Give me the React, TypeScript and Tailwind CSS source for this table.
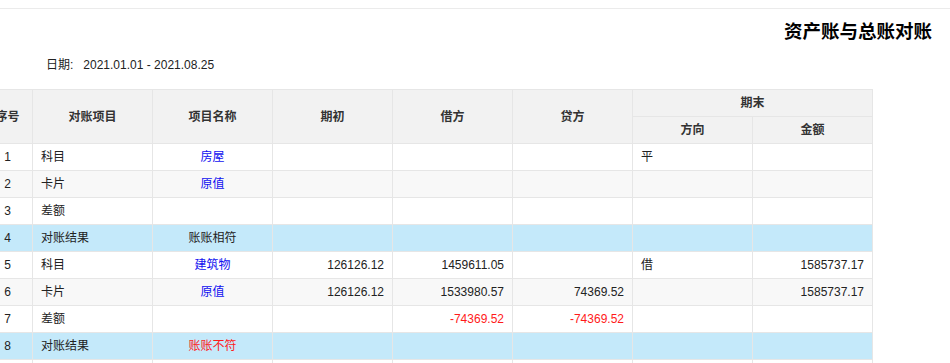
const ROWS = [
  { no: 1, item: "科目", name: "房屋", nameColor: "blue", begin: "", debit: "", credit: "", dir: "平", amount: "", kind: "odd" },
  { no: 2, item: "卡片", name: "原值", nameColor: "blue", begin: "", debit: "", credit: "", dir: "", amount: "", kind: "even" },
  { no: 3, item: "差额", name: "", nameColor: "", begin: "", debit: "", credit: "", dir: "", amount: "", kind: "odd" },
  { no: 4, item: "对账结果", name: "账账相符", nameColor: "", begin: "", debit: "", credit: "", dir: "", amount: "", kind: "result" },
  { no: 5, item: "科目", name: "建筑物", nameColor: "blue", begin: "126126.12", debit: "1459611.05", credit: "", dir: "借", amount: "1585737.17", kind: "odd" },
  { no: 6, item: "卡片", name: "原值", nameColor: "blue", begin: "126126.12", debit: "1533980.57", credit: "74369.52", dir: "", amount: "1585737.17", kind: "even" },
  { no: 7, item: "差额", name: "", nameColor: "", begin: "", debit: "-74369.52", credit: "-74369.52", dir: "", amount: "", kind: "odd", red: true },
  { no: 8, item: "对账结果", name: "账账不符", nameColor: "red", begin: "", debit: "", credit: "", dir: "", amount: "", kind: "result" },
  { no: 9, item: "科目", name: "", nameColor: "", begin: "", debit: "", credit: "", dir: "", amount: "", kind: "odd" },
];

const cell = "border border-[#e6e6e6] h-[27px] px-2 py-0 leading-none";
const th = "border border-[#e6e6e6] h-[27px] px-2 py-0 font-bold text-center text-[#333]";

export default function App() {
  return (
    <div className="w-[950px] h-[363px] overflow-hidden bg-white text-[12px] text-[#222]"
      style={{ fontFamily: '"Liberation Sans", "Noto Sans CJK SC", sans-serif' }}>

      {/* Top divider */}
      <div className="h-[8px]" />
      <div className="h-px bg-[#ebebeb]" />

      {/* Title */}
      <div className="flex justify-end pr-[18px] pt-[14px] h-[46px]">
        <h1 className="text-[18.5px] font-bold text-black leading-none">资产账与总账对账</h1>
      </div>

      {/* Date range */}
      <div className="flex items-center pl-[46px] h-[20px] text-[12px] text-[#222]">
        <span>日期:</span>
        <span className="ml-[10px]">2021.01.01 - 2021.08.25</span>
      </div>

      {/* Table */}
      <div className="mt-[14px] overflow-hidden">
        <table className="table-fixed border-collapse ml-[-18px] w-[890px]">
          <colgroup>
            <col className="w-[50px]" />
            {[0, 1, 2, 3, 4, 5, 6].map((i) => (
              <col key={i} className="w-[120px]" />
            ))}
          </colgroup>
          <thead className="bg-[#f2f2f2]">
            <tr>
              <th rowSpan={2} className={th}>序号</th>
              <th rowSpan={2} className={th}>对账项目</th>
              <th rowSpan={2} className={th}>项目名称</th>
              <th rowSpan={2} className={th}>期初</th>
              <th rowSpan={2} className={th}>借方</th>
              <th rowSpan={2} className={th}>贷方</th>
              <th colSpan={2} className={th}>期末</th>
            </tr>
            <tr>
              <th className={th}>方向</th>
              <th className={th}>金额</th>
            </tr>
          </thead>
          <tbody>
            {ROWS.map((r) => {
              const bg =
                r.kind === "result" ? "bg-[#c4e9fa]" : r.kind === "even" ? "bg-[#f8f8f8]" : "bg-white";
              const nameCls =
                r.nameColor === "blue" ? "text-[#1010f0]" : r.nameColor === "red" ? "text-[#ff1a1a]" : "text-[#222]";
              const numCls = r.red ? "text-[#ff1a1a]" : "text-[#222]";
              return (
                <tr key={r.no} className={bg}>
                  <td className={`${cell} text-center`}>{r.no}</td>
                  <td className={`${cell} text-left`}>{r.item}</td>
                  <td className={`${cell} text-center ${nameCls}`}>{r.name}</td>
                  <td className={`${cell} text-right`}>{r.begin}</td>
                  <td className={`${cell} text-right ${numCls}`}>{r.debit}</td>
                  <td className={`${cell} text-right ${numCls}`}>{r.credit}</td>
                  <td className={`${cell} text-left`}>{r.dir}</td>
                  <td className={`${cell} text-right`}>{r.amount}</td>
                </tr>
              );
            })}
          </tbody>
        </table>
      </div>
    </div>
  );
}
